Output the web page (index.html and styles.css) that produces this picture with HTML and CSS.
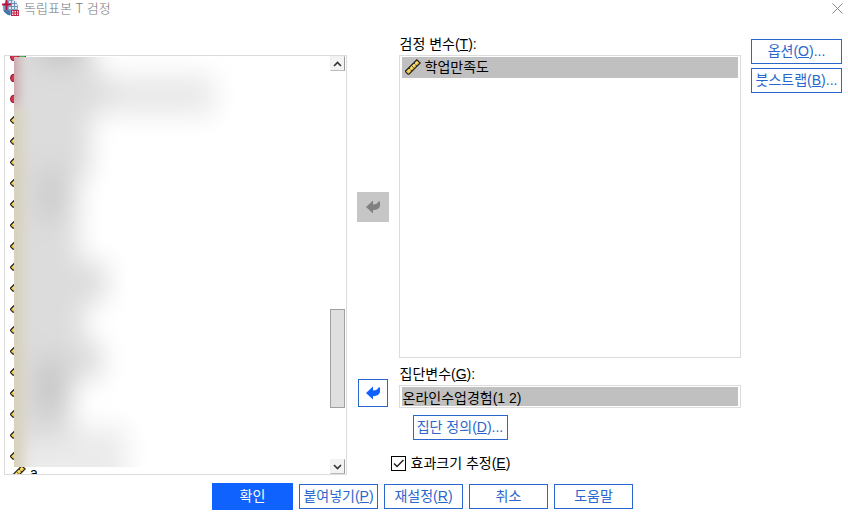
FILE: index.html
```
<!DOCTYPE html>
<html lang="ko">
<head>
    <meta charset="UTF-8">
    <meta name="viewport" content="width=device-width, initial-scale=1.0">
    <title>독립표본 T 검정</title>
    <link rel="stylesheet" href="styles.css">
</head>
<body>
    <svg class="defs" width="0" height="0" aria-hidden="true">
        <symbol id="scale" viewBox="0 0 16 16">
            <path d="M0.6 12 L11.8 0.8 L15.2 4 L4 15.2 L3 15.2 L0.6 12.8 Z" fill="#edc53a" stroke="#1c1c1c" stroke-width="1.1"/>
            <path d="M3 12.4 L12.4 3" stroke="#fbe48a" stroke-width="1.2"/>
            <path d="M4 9 l1.2 1.2 M6.5 6.5 l1.2 1.2 M9 4 l1.2 1.2 M6.8 12 l-1.2 -1.2 M9.3 9.5 l-1.2 -1.2 M11.8 7 l-1.2 -1.2" stroke="#333" stroke-width="1"/>
        </symbol>
        <symbol id="nominal" viewBox="0 0 16 16">
            <circle cx="8" cy="4" r="3.5" fill="#3f7fcf" stroke="#234"/>
            <circle cx="12" cy="12" r="3.5" fill="#4fae54" stroke="#243"/>
            <circle cx="4.5" cy="12" r="4" fill="#d8324c" stroke="#8f1a2c"/>
        </symbol>
        <symbol id="arrow" viewBox="0 0 16 14">
            <path d="M1 7 L8 0.5 V4.4 C11 4.4 12.8 3.6 13.4 1.6 H15 V5 C15 8.5 12.5 10 8 10 V13.6 Z" fill="currentColor"/>
        </symbol>
    </svg>

    <header class="titlebar">
        <svg class="logo" viewBox="0 0 17 16">
            <circle cx="8.5" cy="7.5" r="7.6" fill="#7d9fc6"/>
            <path d="M7 1 h8 v8 h-8 z" fill="#dfe9f4"/>
            <path d="M7 3.5 h8 M7 6.5 h8 M9.5 1 v8 M12.5 1 v8" stroke="#6d8fba" stroke-width="1"/>
            <path d="M1 10 q3 5 7 5.4 v-5 z" fill="#4573ad"/>
            <path d="M4.5 0 v10 M0 4.5 h9" stroke="#b81440" stroke-width="2"/>
            <path d="M9 10 h8 v6 h-8 z" fill="#f4d7de"/>
            <path d="M9 10.5 h8 M9 13 h8 M9 15.5 h8 M9.5 10 v6 M12 10 v6 M14.5 10 v6 M16.7 10 v6" stroke="#c02548" stroke-width="1"/>
        </svg>
        <span class="title">독립표본 T 검정</span>
        <button class="close" aria-label="닫기">
            <svg viewBox="0 0 11 11"><path d="M0.5 0.5 L10.5 10.5 M10.5 0.5 L0.5 10.5" stroke="#888" stroke-width="1"/></svg>
        </button>
    </header>

    <main class="dialog">
        <div class="source">
            <ul class="rows">
                <li><svg><use href="#nominal"/></svg></li>
                <li><svg><use href="#nominal"/></svg></li>
                <li><svg><use href="#nominal"/></svg></li>
                <li><svg><use href="#scale"/></svg></li>
                <li><svg><use href="#scale"/></svg></li>
                <li><svg><use href="#scale"/></svg></li>
                <li><svg><use href="#scale"/></svg></li>
                <li><svg><use href="#scale"/></svg></li>
                <li><svg><use href="#scale"/></svg></li>
                <li><svg><use href="#scale"/></svg></li>
                <li><svg><use href="#scale"/></svg></li>
                <li><svg><use href="#scale"/></svg></li>
                <li><svg><use href="#scale"/></svg></li>
                <li><svg><use href="#scale"/></svg></li>
                <li><svg><use href="#scale"/></svg></li>
                <li><svg><use href="#scale"/></svg></li>
                <li><svg><use href="#scale"/></svg></li>
                <li><svg><use href="#scale"/></svg></li>
                <li><svg><use href="#scale"/></svg></li>
                <li><svg><use href="#scale"/></svg></li>
                <li><svg><use href="#scale"/></svg>a</li>
            </ul>
            <!-- variable names are hidden behind a blurred patch -->
            <div class="redacted">
                <svg width="316" height="410" viewBox="0 0 316 410">
                    <filter id="soft" x="-30%" y="-30%" width="160%" height="160%"><feGaussianBlur stdDeviation="13"/></filter>
                    <filter id="edge" x="-100%" y="-30%" width="400%" height="160%"><feGaussianBlur stdDeviation="6"/></filter>
                    <g filter="url(#soft)">
                        <path d="M70 18 H200 V58 H70 Z" fill="#e9e9e9"/>
                        <path d="M-40 -40 H82 V20 H96 V50 H76 V120 H64 V205 H92 V245 H70 V285 H88 V322 H58 V385 H-40 Z" fill="#dcdcdc"/>
                        <path d="M-40 385 H58 V370 H112 V450 H-40 Z" fill="#ebebeb"/>
                        <path d="M26 -30 H66 V8 H26 Z" fill="#c4c4c4"/>
                        <ellipse cx="38" cy="137" rx="16" ry="30" fill="#cdcdcd"/>
                        <ellipse cx="38" cy="330" rx="18" ry="32" fill="#c8c8c8"/>
                    </g>
                    <g filter="url(#edge)">
                        <path d="M-20 -20 H4 V48 H-20 Z" fill="#c99ba2"/>
                        <path d="M-20 52 H10 V430 H-20 Z" fill="#d8d2bc"/>
                    </g>
                </svg>
            </div>
            <div class="scrollbar">
                <button class="step" aria-label="위로"><svg viewBox="0 0 9 6"><path d="M1 5 L4.5 1.5 L8 5" fill="none" stroke="#333" stroke-width="1.6"/></svg></button>
                <div class="track-above"></div>
                <div class="thumb"></div>
                <div class="track-below"></div>
                <button class="step" aria-label="아래로"><svg viewBox="0 0 9 6"><path d="M1 1 L4.5 4.5 L8 1" fill="none" stroke="#333" stroke-width="1.6"/></svg></button>
            </div>
        </div>

        <button class="move move-test" aria-label="검정 변수에서 제거" disabled><svg><use href="#arrow"/></svg></button>
        <button class="move move-group" aria-label="집단변수에서 제거"><svg><use href="#arrow"/></svg></button>

        <div class="caption test-caption" id="test-caption">검정 변수(<u>T</u>):</div>
        <ul class="test-list" aria-labelledby="test-caption">
            <li><svg><use href="#scale"/></svg>학업만족도</li>
        </ul>

        <label class="caption group-caption" for="group">집단변수(<u>G</u>):</label>
        <div class="group-field"><input id="group" type="text" value="온라인수업경험(1 2)" readonly></div>
        <button class="btn define">집단 정의(<u>D</u>)...</button>
        <label class="effect"><input type="checkbox" checked><span>효과크기 추정(<u>E</u>)</span></label>

        <div class="side">
            <button class="btn">옵션(<u>O</u>)...</button>
            <button class="btn">붓스트랩(<u>B</u>)...</button>
        </div>
    </main>

    <footer class="actions">
        <button class="btn primary">확인</button>
        <button class="btn">붙여넣기(<u>P</u>)</button>
        <button class="btn">재설정(<u>R</u>)</button>
        <button class="btn">취소</button>
        <button class="btn">도움말</button>
    </footer>
</body>
</html>
```
FILE: styles.css
```
* { box-sizing: border-box; }
body {
    margin: 0;
    height: 100vh;
    display: flex;
    flex-direction: column;
    background: #fff;
    color: #000;
    font: 14px/18px "Liberation Sans", "Noto Sans CJK KR", sans-serif;
}
button, input { font: inherit; }
ul { list-style: none; margin: 0; padding: 0; }
.defs { position: absolute; }

.titlebar { display: flex; align-items: center; height: 16px; margin-bottom: 19px; padding: 0 5px 0 2px; }
.logo { width: 17px; height: 16px; margin-right: 5px; }
.title { font: 300 13px/16px "Noto Sans CJK KR", sans-serif; color: #777; }
.close { margin-left: auto; padding: 0; border: 0; background: none; height: 11px; }
.close svg { display: block; width: 11px; height: 11px; }

.dialog {
    flex: 1;
    min-height: 0;
    display: grid;
    grid-template-columns: 1fr 32px 1fr 91px;
    grid-template-rows: 20px 1fr 27px 23px 32px 35px;
    column-gap: 10px;
    padding: 0 6px 0 4px;
}

/* left list */
.source {
    grid-column: 1;
    grid-row: 2 / 7;
    position: relative;
    display: flex;
    overflow: hidden;
    min-height: 0;
    border: 1px solid #dcdcdc;
}
.rows { flex: 1; margin-top: -14px; padding-left: 5px; }
.rows li { display: flex; align-items: center; gap: 4px; height: 21px; }
.rows svg, .test-list svg { width: 16px; height: 16px; }
.redacted {
    position: absolute;
    top: 1px;
    left: 9px;
    right: 16px;
    bottom: 7px;
    overflow: hidden;
    background: #fff;
}
.redacted svg { display: block; }
.scrollbar { display: flex; flex-direction: column; width: 16px; padding-right: 1px; }
.step {
    display: flex;
    align-items: center;
    justify-content: center;
    height: 15px;
    padding: 0;
    border: 1px solid #f0f0f0;
    border-right-color: #999;
    border-bottom-color: #bbb;
    background: #f3f3f3;
}
.step svg { width: 9px; height: 6px; }
.track-above { flex: 239; }
.thumb { flex: 97; border: 1px solid #a0a0a0; background: #dfdfdf; }
.track-below { flex: 51; }

/* arrows between the lists */
.move { grid-column: 2; display: flex; align-items: center; justify-content: center; padding: 0; }
.move svg { width: 16px; height: 14px; }
.move-test { grid-row: 2; align-self: center; height: 30px; border: 0; background: #c6c6c6; color: #808080; }
.move-group {
    grid-row: 3 / 5;
    align-self: end;
    justify-self: center;
    width: 30px;
    height: 28px;
    margin-bottom: 1px;
    border: 1px solid #2a66cc;
    background: #fff;
    color: #0f62fe;
}

/* right side */
.caption { grid-column: 3; padding-left: 1px; }
.test-caption { grid-row: 1; }
.test-list { grid-column: 3; grid-row: 2; padding: 1px 2px; border: 1px solid #dcdcdc; }
.test-list li {
    display: flex;
    align-items: center;
    gap: 4px;
    height: 21px;
    padding: 0 0 2px 3px;
    background: #c0c0c0;
}
.group-caption { grid-row: 3; padding-top: 7px; }
.group-field { grid-column: 3; grid-row: 4; padding: 1px 2px; border: 1px solid #dcdcdc; }
.group-field input { display: block; width: 100%; height: 19px; padding: 0 1px; border: 0; outline: 0; background: #c0c0c0; color: #000; }

.btn { height: 25px; padding: 0 0 2px; border: 1px solid #2a66cc; background: #fff; color: #2a66cc; white-space: nowrap; }
.define { grid-column: 3; grid-row: 5; align-self: end; width: 95px; margin-left: 14px; }
.effect {
    grid-column: 3;
    grid-row: 6;
    align-self: end;
    justify-self: start;
    display: flex;
    align-items: center;
    gap: 5px;
    margin-left: -8px;
    padding-bottom: 3px;
}
.effect input {
    appearance: none;
    width: 15px;
    height: 15px;
    margin: 0;
    border: 1px solid #000;
    background: #fff;
}
.effect input:checked {
    background: url("data:image/svg+xml,%3Csvg xmlns='http://www.w3.org/2000/svg' viewBox='0 0 13 13'%3E%3Cpath d='M2 6.5 L5 9.5 L11.5 3' fill='none' stroke='%23222' stroke-width='1.5'/%3E%3C/svg%3E") center / 13px 13px no-repeat;
}
.side { grid-column: 4; grid-row: 1 / 3; display: flex; flex-direction: column; gap: 4px; padding-top: 4px; }

.actions { display: flex; align-items: center; justify-content: center; gap: 6px; padding: 8px 3px 8px 0; }
.actions .btn { width: 79px; }
.actions .primary { width: 81px; height: 27px; border-color: #0f62fe; background: #0f62fe; color: #fff; }
```
